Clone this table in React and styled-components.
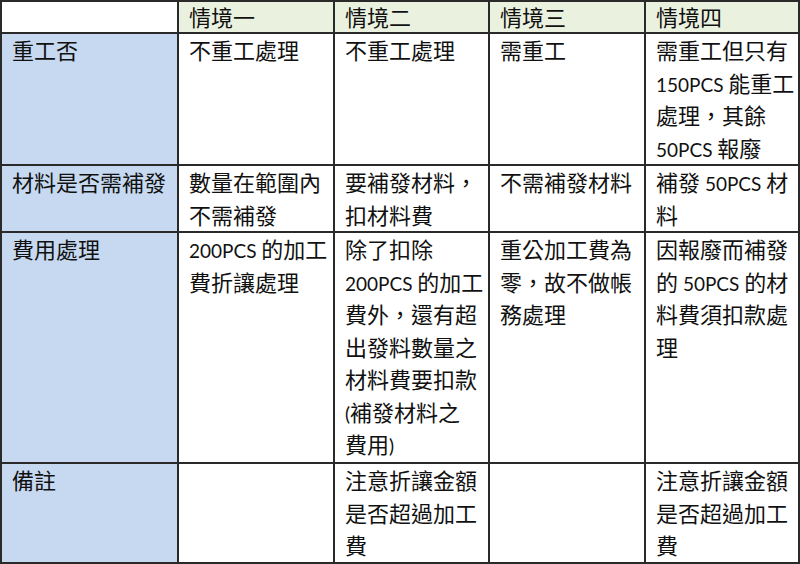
import React from "react";
import styled, { createGlobalStyle } from "styled-components";

const Global = createGlobalStyle`
  html, body {
    margin: 0;
    padding: 0;
    background: #ffffff;
  }
  body {
    font-family: "Noto Sans CJK TC", "Noto Sans CJK SC", sans-serif;
    color: #111;
  }
`;

const Grid = styled.div`
  width: 800px;
  height: 564px;
  box-sizing: border-box;
  display: grid;
  grid-template-columns: 177px 156px 155px 156px 154px;
  grid-template-rows: 32px 132px 67px 231px 100px;
  border-left: 2px solid #2a2a2a;
  border-top: 2px solid #2a2a2a;
`;

const Cell = styled.div`
  box-sizing: border-box;
  min-width: 0;
  border-right: 2px solid #2a2a2a;
  border-bottom: 2px solid #2a2a2a;
  padding: 0 0 0 10px;
  background: ${(p) => (p.$fill ? p.$fill : "#ffffff")};
  font-size: 22px;
`;

const Line = styled.div`
  white-space: nowrap;
  height: ${(p) => (p.$head ? "29px" : "32.5px")};
  line-height: ${(p) => (p.$head ? "29px" : "31px")};
`;

const Lat = styled.span`
  font-family: Lato, "Open Sans", sans-serif;
  font-size: 19px;
  line-height: 1;
`;

const HEAD_FILL = "#ebf1df";
const SIDE_FILL = "#c6d9f0";

const header = ["", "情境一", "情境二", "情境三", "情境四"];

const rows = [
  {
    label: "重工否",
    cells: [
      ["不重工處理"],
      ["不重工處理"],
      ["需重工"],
      ["需重工但只有", "150PCS 能重工", "處理，其餘", "50PCS 報廢"],
    ],
  },
  {
    label: "材料是否需補發",
    cells: [
      ["數量在範圍內", "不需補發"],
      ["要補發材料，", "扣材料費"],
      ["不需補發材料"],
      ["補發 50PCS 材", "料"],
    ],
  },
  {
    label: "費用處理",
    cells: [
      ["200PCS 的加工", "費折讓處理"],
      [
        "除了扣除",
        "200PCS 的加工",
        "費外，還有超",
        "出發料數量之",
        "材料費要扣款",
        "(補發材料之",
        "費用)",
      ],
      ["重公加工費為", "零，故不做帳", "務處理"],
      ["因報廢而補發", "的 50PCS 的材", "料費須扣款處", "理"],
    ],
  },
  {
    label: "備註",
    cells: [
      [],
      ["注意折讓金額", "是否超過加工", "費"],
      [],
      ["注意折讓金額", "是否超過加工", "費"],
    ],
  },
];

// ascii runs get the latin face, the rest stays CJK
const renderText = (text) =>
  text.split(/([\x20-\x7e]+)/).map((part, i) =>
    /^[\x20-\x7e]+$/.test(part) ? <Lat key={i}>{part}</Lat> : part
  );

const Lines = ({ lines, head }) =>
  lines.map((l, i) => (
    <Line key={i} $head={head}>
      {renderText(l)}
    </Line>
  ));

export default function App() {
  return (
    <>
      <Global />
      <Grid>
        {header.map((h, i) => (
          <Cell key={"h" + i} $fill={i === 0 ? "#ffffff" : HEAD_FILL}>
            <Lines lines={h ? [h] : []} head />
          </Cell>
        ))}
        {rows.map((row, r) => (
          <React.Fragment key={r}>
            <Cell $fill={SIDE_FILL}>
              <Lines lines={[row.label]} />
            </Cell>
            {row.cells.map((c, j) => (
              <Cell key={j}>
                <Lines lines={c} />
              </Cell>
            ))}
          </React.Fragment>
        ))}
      </Grid>
    </>
  );
}
